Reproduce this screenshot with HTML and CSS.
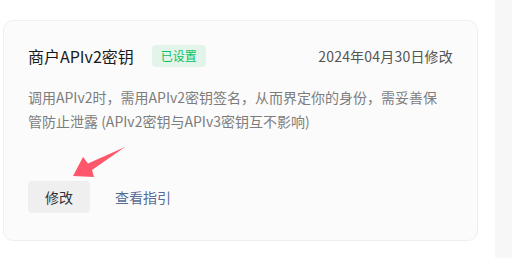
FILE: index.html
```html
<!DOCTYPE html>
<html lang="zh-CN">
<head>
<meta charset="utf-8">
<link rel="stylesheet" href="styles.css">
</head>
<body>
<div class="page">
  <main class="main">
    <section class="card">
      <div class="head">
        <div class="head-left">
          <h2 class="title">商户APIv2密钥</h2>
          <span class="badge">已设置</span>
        </div>
        <div class="date">2024年04月30日修改</div>
      </div>
      <p class="desc">调用APIv2时，需用APIv2密钥签名，从而界定你的身份，需妥善保管防止泄露 (APIv2密钥与APIv3密钥互不影响)</p>
      <div class="actions">
        <button class="btn">修改</button>
        <a class="link" href="#">查看指引</a>
        <svg class="arrow" width="60" height="40" viewBox="0 0 60 40" aria-hidden="true">
          <polygon points="5,35 15,16 20,22.5 57,6 24,29 26,36" fill="#fe566b"/>
        </svg>
      </div>
    </section>
  </main>
  <aside class="side"></aside>
</div>
</body>
</html>
```
FILE: styles.css
```css
* { box-sizing: border-box; }
html, body { margin: 0; padding: 0; background: #fff; }
body {
  font-family: "Noto Sans CJK SC", "Noto Sans", sans-serif;
  width: 512px;
  height: 258px;
  overflow: hidden;
}
.page {
  display: flex;
  height: 258px;
}
.main {
  width: 495px;
  padding: 20px 17px 0 3px;
}
.side {
  flex: 1;
  background: #f7f7f7;
}
.card {
  background: #fbfbfb;
  border: 1px solid #efefef;
  border-radius: 10px;
  padding: 24px 24px 27px 24px;
  height: 221px;
}
.head {
  display: flex;
  align-items: center;
  justify-content: space-between;
  height: 22px;
}
.head-left {
  display: flex;
  align-items: center;
}
.title {
  margin: 0;
  font-size: 16px;
  font-weight: 400;
  color: #191919;
  line-height: 22px;
}
.badge {
  margin-left: 18px;
  height: 22px;
  line-height: 22px;
  padding: 0 9px;
  font-size: 12px;
  color: #07c160;
  background: #e3f5ea;
  border-radius: 4px;
}
.date {
  font-size: 14px;
  color: #555;
  line-height: 22px;
  letter-spacing: 0.2px;
}
.desc {
  margin: 18px 0 0 0;
  width: 418px;
  font-size: 14px;
  line-height: 24px;
  color: #7d7d7d;
}
.actions {
  position: relative;
  display: flex;
  align-items: center;
  margin-top: 48px;
}
.btn {
  font-family: inherit;
  width: 62px;
  height: 32px;
  border: none;
  border-radius: 4px;
  background: #efefef;
  color: #333;
  font-size: 14px;
  padding: 0;
}
.link {
  margin-left: 25px;
  font-size: 14px;
  color: #576b95;
  text-decoration: none;
}
.arrow {
  position: absolute;
  left: 40px;
  top: -40px;
}
```
